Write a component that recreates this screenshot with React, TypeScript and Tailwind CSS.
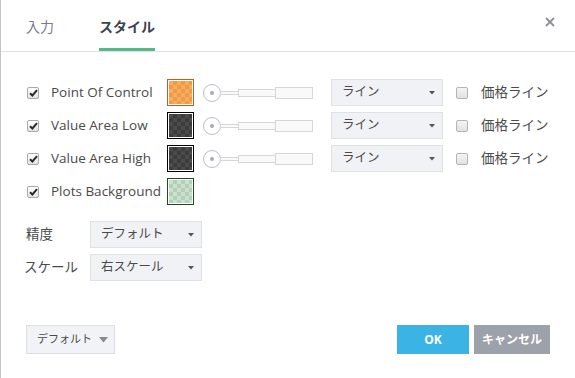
import React from "react";

const FONT = "font-['Open_Sans','Noto_Sans_CJK_JP',sans-serif]";

function Checked() {
  return (
    <div className="w-[12px] h-[12px] rounded-[2px] border border-[#a8a8a8] bg-[linear-gradient(#ffffff,#e4e4e4)] flex items-center justify-center shrink-0">
      <svg width="9" height="8" viewBox="0 0 9 8">
        <path d="M1 4.2 L3.4 6.5 L8 1.2" fill="none" stroke="#2b2b2b" strokeWidth="2" />
      </svg>
    </div>
  );
}

function Unchecked() {
  return (
    <div className="w-[12px] h-[12px] rounded-[2px] border border-[#b4b4b4] bg-[linear-gradient(#f4f4f4,#e2e2e2)] shrink-0" />
  );
}

function Caret() {
  return (
    <svg width="6" height="4" viewBox="0 0 6 4" className="shrink-0">
      <path d="M0 0 H6 L3 3.5 Z" fill="#555" />
    </svg>
  );
}

function Select({ label, width }: { label: string; width: string }) {
  return (
    <div className={`${width} h-[27px] bg-[#f1f2f5] border border-[#dfe1e6] flex items-center justify-between pl-[10px] pr-[7px] text-[12.5px] text-[#4a4a4a]`}>
      <span>{label}</span>
      <Caret />
    </div>
  );
}

function Slider() {
  return (
    <div className="flex items-center shrink-0">
      <div className="w-[18px] h-[18px] rounded-full border border-[#b9bdc9] bg-white flex items-center justify-center">
        <div className="w-[4px] h-[4px] rounded-full bg-[#a6aab5]" />
      </div>
      <div className="w-[19px] h-[4px] -ml-px border border-[#d6d6d6] bg-[#f9f9f9]" />
      <div className="w-[38px] h-[8px] -ml-px border border-[#d6d6d6] bg-[#f9f9f9]" />
      <div className="w-[38px] h-[12px] -ml-px border border-[#d6d6d6] bg-[#f9f9f9]" />
    </div>
  );
}

function Swatch({ kind }: { kind: "orange" | "dark" | "green" }) {
  const cls =
    kind === "orange"
      ? "border-[#d2561a] p-px bg-white"
      : kind === "dark"
      ? "border-black p-px bg-white"
      : "border-[#1f4a1f] p-px bg-white";
  const inner =
    kind === "orange"
      ? "bg-[conic-gradient(#f09a45_25%,#f6ad62_0_50%,#f09a45_0_75%,#f6ad62_0)]"
      : kind === "dark"
      ? "bg-[conic-gradient(#3c3c3c_25%,#4b4b4b_0_50%,#3c3c3c_0_75%,#4b4b4b_0)]"
      : "bg-[conic-gradient(#b3cfb7_25%,#cbe0cd_0_50%,#b3cfb7_0_75%,#cbe0cd_0)]";
  return (
    <div className={`w-[27px] h-[27px] border ${cls} shrink-0`}>
      <div className={`w-full h-full ${inner} bg-[length:8px_8px]`} />
    </div>
  );
}

function PlotRow({ label, swatch }: { label: string; swatch: "orange" | "dark" }) {
  return (
    <div className="flex items-center h-[27px]">
      <Checked />
      <span className="ml-[12px] w-[116px] text-[13.5px] text-[#4a4a4a] whitespace-nowrap">{label}</span>
      <Swatch kind={swatch} />
      <div className="ml-[9px]">
        <Slider />
      </div>
      <div className="ml-[18px]">
        <Select label="ライン" width="w-[112px]" />
      </div>
      <div className="ml-[13px]">
        <Unchecked />
      </div>
      <span className="ml-[13px] text-[13.5px] text-[#4a4a4a] whitespace-nowrap">価格ライン</span>
    </div>
  );
}

export default function App() {
  return (
    <div className={`${FONT} w-[575px] h-[378px] bg-white border-l border-[#c4c4c4] flex flex-col overflow-hidden`}>
      <div className="h-[52px] border-b border-[#e1e3e8] flex items-stretch pl-[25px] pr-[20px] shrink-0">
        <div className="flex items-center text-[14px] text-[#787c86] pt-[2px]">入力</div>
        <div className="ml-[45px] flex items-center text-[14px] font-bold text-[#3d4350] border-b-[3px] border-[#53b987] pt-[5px]">
          スタイル
        </div>
        <div className="ml-auto flex items-center pb-[7px]">
          <svg width="10" height="10" viewBox="0 0 10 10">
            <path d="M1 1 L9 9 M9 1 L1 9" stroke="#8e8e94" strokeWidth="1.8" />
          </svg>
        </div>
      </div>

      <div className="pl-[26px] pt-[27px] flex flex-col gap-[6px]">
        <PlotRow label="Point Of Control" swatch="orange" />
        <PlotRow label="Value Area Low" swatch="dark" />
        <PlotRow label="Value Area High" swatch="dark" />
        <div className="flex items-center h-[27px]">
          <Checked />
          <span className="ml-[12px] w-[116px] text-[13.5px] text-[#4a4a4a] whitespace-nowrap">Plots Background</span>
          <Swatch kind="green" />
        </div>
      </div>

      <div className="pl-[25px] pt-[16px] flex flex-col gap-[6px]">
        <div className="flex items-center h-[27px]">
          <span className="w-[64px] text-[13.5px] text-[#4a4a4a]">精度</span>
          <Select label="デフォルト" width="w-[112px]" />
        </div>
        <div className="flex items-center h-[27px]">
          <span className="w-[64px] text-[13.5px] text-[#4a4a4a] -ml-[2px] mr-[2px]">スケール</span>
          <Select label="右スケール" width="w-[112px]" />
        </div>
      </div>

      <div className="mt-auto mb-[24px] px-[25px] flex items-center">
        <div className="w-[89px] h-[29px] bg-[#f2f3f6] border border-[#dcdee3] flex items-center pl-[10px] gap-[7px] text-[11px] text-[#4a4a4a]">
          <span>デフォルト</span>
          <svg width="9" height="6" viewBox="0 0 9 6">
            <path d="M0 0 H9 L4.5 5.5 Z" fill="#8a8a8a" />
          </svg>
        </div>
        <div className="ml-auto flex gap-[5px]">
          <div className="w-[72px] h-[29px] bg-[#3bb4e5] flex items-center justify-center text-white text-[12px] font-bold">OK</div>
          <div className="w-[76px] h-[29px] bg-[#9da1a9] flex items-center justify-center text-white text-[12px] font-bold">キャンセル</div>
        </div>
      </div>
    </div>
  );
}
